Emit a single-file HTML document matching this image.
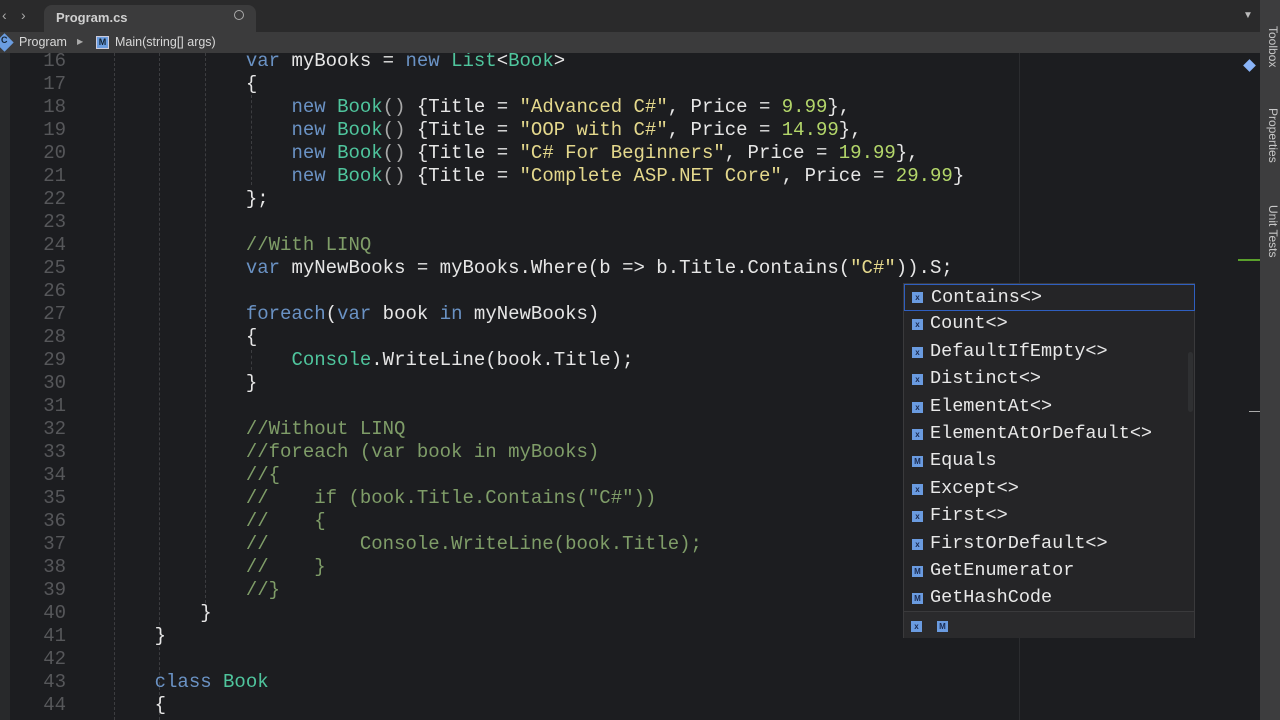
<!DOCTYPE html>
<html><head><meta charset="utf-8"><style>
*{margin:0;padding:0;box-sizing:border-box}
body{width:1280px;height:720px;overflow:hidden;background:#1c1d20;font-family:"Liberation Sans",sans-serif;position:relative}
.tabbar{position:absolute;left:0;top:0;width:1260px;height:32px;background:#2a2a2b;z-index:2}
.tab{position:absolute;left:44px;top:5px;width:212px;height:27px;background:#3b3b3c;border-radius:8px 8px 0 0;color:#cfcfcf;font-size:13px;font-weight:bold;padding:5px 0 0 12px}
.crumb{position:absolute;left:0;top:32px;width:1260px;height:21px;background:#3b3b3c;color:#d8d8d8;font-size:12.5px;z-index:2}
.side{position:absolute;left:1260px;top:0;width:20px;height:720px;background:#3d3d3e}
.vt{position:absolute;left:1266px;writing-mode:vertical-rl;color:#c8c8c8;font-size:12px}
.lstrip{position:absolute;left:0;top:53px;width:10px;height:667px;background:#28292b}
.code{position:absolute;left:0;top:50px;font-family:"Liberation Mono",monospace;font-size:19px;line-height:23px;color:#e6e6e6;white-space:pre}
.ln{position:absolute;left:10px;width:56px;text-align:right;color:#56575a;font-family:"Liberation Mono",monospace;font-size:19px}
.guide{position:absolute;top:53px;height:667px;border-left:1px dashed #3c3d40}
.k{color:#6a92c4}.t{color:#4fc59d}.s{color:#e4d88c}.n{color:#b3d66a}.c{color:#7f9d68}.p{color:#a8a8a8}
.pop{position:absolute;left:903px;top:283px;width:292px;height:355px;background:#252527;border:1px solid #3a3a3c;font-family:"Liberation Mono",monospace;font-size:18.5px;color:#e8e8e8}
.it{position:absolute;left:0;height:27px;width:290px;padding-left:26px;line-height:26px}
.ic{position:absolute;left:8px;top:8px;width:11px;height:11px;background:#6a9be0;color:#1a2a50;font-size:8px;line-height:11px;text-align:center;font-family:"Liberation Sans",sans-serif;font-weight:bold}
</style></head><body>
<div class="tabbar">
<div style="position:absolute;left:2px;top:7px;color:#aaa;font-size:14px">&lsaquo;</div>
<div style="position:absolute;left:21px;top:7px;color:#aaa;font-size:14px">&rsaquo;</div>
<div class="tab">Program.cs<span style="position:absolute;left:190px;top:5px;width:10px;height:10px;border:1.5px solid #aaa;border-radius:50%"></span></div>
<div style="position:absolute;left:1243px;top:10px;color:#bbb;font-size:10px">▼</div>
</div>
<div class="crumb">
<span style="position:absolute;left:-2px;top:4px;width:13px;height:13px;background:#6b9de0;transform:rotate(45deg)"></span>
<span style="position:absolute;left:1px;top:3px;color:#123;font-size:9px;font-weight:bold">C</span>
<span style="position:absolute;left:19px;top:3px">Program</span>
<span style="position:absolute;left:77px;top:5px;font-size:8px;color:#aaa">▶</span>
<span style="position:absolute;left:96px;top:4px;width:13px;height:13px;background:#6b9de0;border:1px solid #ccd;color:#123;font-size:9px;text-align:center;line-height:11px;font-weight:bold">M</span>
<span style="position:absolute;left:115px;top:3px">Main(string[] args)</span>
</div>
<div class="side"></div>
<div class="vt" style="top:26px">Toolbox</div>
<div class="vt" style="top:108px">Properties</div>
<div class="vt" style="top:205px">Unit Tests</div>
<div style="position:absolute;left:1245px;top:61px;width:9px;height:9px;background:#8ab4f8;transform:rotate(45deg)"></div>
<div style="position:absolute;left:1238px;top:259px;width:22px;height:2px;background:#5aa02c"></div>
<div style="position:absolute;left:1249px;top:411px;width:11px;height:1px;background:#aaa"></div>
<div style="position:absolute;left:1019px;top:53px;width:1px;height:667px;background:#2b2c2f"></div>
<div class="lstrip"></div>
<div class="guide" style="left:114px"></div>
<div class="guide" style="left:159px"></div>
<div class="guide" style="left:205px;top:53px;height:560px"></div>
<div class="guide" style="left:251px;top:95px;height:90px"></div>
<div class="guide" style="left:251px;top:350px;height:20px"></div>

<div class="ln" style="top:50px;line-height:23px;white-space:pre">16
17
18
19
20
21
22
23
24
25
26
27
28
29
30
31
32
33
34
35
36
37
38
39
40
41
42
43
44</div>

<div class="code" style="left:109px">            <span class="k">var</span> myBooks = <span class="k">new</span> <span class="t">List</span>&lt;<span class="t">Book</span>&gt;
            {
                <span class="k">new</span> <span class="t">Book</span><span class="p">()</span> {Title = <span class="s">"Advanced C#"</span>, Price = <span class="n">9.99</span>},
                <span class="k">new</span> <span class="t">Book</span><span class="p">()</span> {Title = <span class="s">"OOP with C#"</span>, Price = <span class="n">14.99</span>},
                <span class="k">new</span> <span class="t">Book</span><span class="p">()</span> {Title = <span class="s">"C# For Beginners"</span>, Price = <span class="n">19.99</span>},
                <span class="k">new</span> <span class="t">Book</span><span class="p">()</span> {Title = <span class="s">"Complete ASP.NET Core"</span>, Price = <span class="n">29.99</span>}
            };

            <span class="c">//With LINQ</span>
            <span class="k">var</span> myNewBooks = myBooks.Where(b =&gt; b.Title.Contains(<span class="s">"C#"</span>)).S;

            <span class="k">foreach</span>(<span class="k">var</span> book <span class="k">in</span> myNewBooks)
            {
                <span class="t">Console</span>.WriteLine(book.Title);
            }

            <span class="c">//Without LINQ</span>
            <span class="c">//foreach (var book in myBooks)</span>
            <span class="c">//{</span>
            <span class="c">//    if (book.Title.Contains("C#"))</span>
            <span class="c">//    {</span>
            <span class="c">//        Console.WriteLine(book.Title);</span>
            <span class="c">//    }</span>
            <span class="c">//}</span>
        }
    }

    <span class="k">class</span> <span class="t">Book</span>
    {</div>

<div class="pop">
<div class="it" style="top:0;border:1px solid #2f5fc0;width:291px"><span class="ic" style="left:7px;top:7px">x</span>Contains&lt;&gt;</div>
<div class="it" style="top:27.4px"><span class="ic">x</span>Count&lt;&gt;</div>
<div class="it" style="top:54.8px"><span class="ic">x</span>DefaultIfEmpty&lt;&gt;</div>
<div class="it" style="top:82.2px"><span class="ic">x</span>Distinct&lt;&gt;</div>
<div class="it" style="top:109.6px"><span class="ic">x</span>ElementAt&lt;&gt;</div>
<div class="it" style="top:137px"><span class="ic">x</span>ElementAtOrDefault&lt;&gt;</div>
<div class="it" style="top:164.4px"><span class="ic">M</span>Equals</div>
<div class="it" style="top:191.8px"><span class="ic">x</span>Except&lt;&gt;</div>
<div class="it" style="top:219.2px"><span class="ic">x</span>First&lt;&gt;</div>
<div class="it" style="top:246.6px"><span class="ic">x</span>FirstOrDefault&lt;&gt;</div>
<div class="it" style="top:274px"><span class="ic">M</span>GetEnumerator</div>
<div class="it" style="top:301.4px"><span class="ic">M</span>GetHashCode</div>
<div style="position:absolute;left:284px;top:68px;width:5px;height:60px;background:#2f3032;border-radius:3px"></div>
<div style="position:absolute;left:0;top:327px;width:290px;height:27px;border-top:1px solid #3a3a3c;background:#2a2a2c">
<span class="ic" style="left:7px;top:9px">x</span><span class="ic" style="left:33px;top:9px">M</span></div>
</div>
</body></html>
